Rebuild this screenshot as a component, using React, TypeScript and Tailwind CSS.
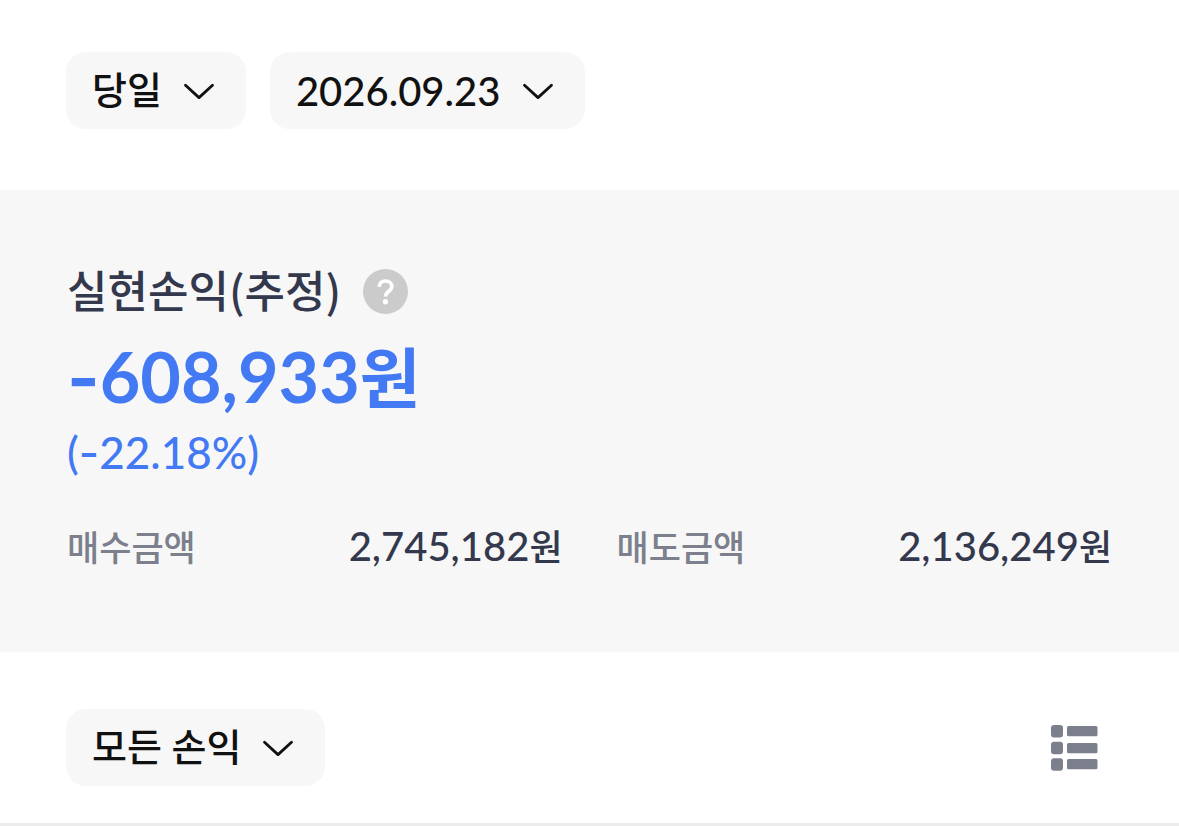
import type { ReactNode } from 'react';

function Chevron({ className = '' }: { className?: string }) {
  return (
    <svg
      viewBox="0 0 32 18"
      className={`w-8 h-[18px] ${className}`}
      fill="none"
      stroke="currentColor"
      strokeWidth="2.8"
      strokeLinecap="round"
      strokeLinejoin="round"
      aria-hidden="true"
    >
      <path d="M2.5 3.2 16 15.6 29.5 3.2" />
    </svg>
  );
}

interface PillSelectProps {
  label: string;
  options: string[];
}

function PillSelect({ label, options }: PillSelectProps) {
  return (
    <div className="relative">
      <select
        aria-label={label}
        className="block appearance-none field-sizing-content h-[77px] rounded-[20px] bg-[#f7f7f7] pl-[26px] pr-[84px] pb-0.5 text-[38px] font-medium text-[#111111]"
      >
        {options.map((option) => (
          <option key={option}>{option}</option>
        ))}
      </select>
      <Chevron className="absolute right-[31px] top-[30px] pointer-events-none text-[#111111]" />
    </div>
  );
}

// Inter's hyphen is wider and sits at digit mid-height
function Minus() {
  return <span className="font-['Inter',sans-serif] leading-none">-</span>;
}

interface AmountProps {
  label: string;
  children: ReactNode;
}

function Amount({ label, children }: AmountProps) {
  return (
    <div className="flex items-center justify-between">
      <dt className="text-[35px] leading-[48px] text-[#7b808c] font-medium">{label}</dt>
      <dd className="text-[40px] leading-[48px] font-medium text-[#34384d]">
        {children}
        <span className="text-[36px]">원</span>
      </dd>
    </div>
  );
}

export default function App() {
  return (
    <main className="bg-white font-['Lato','Noto_Sans_CJK_KR',sans-serif]">
      {/* Period filters */}
      <div className="flex items-center gap-6 px-[66px] pt-[52px] pb-[61px]">
        <PillSelect label="조회 기간" options={['당일', '1주일', '1개월']} />
        <button
          type="button"
          className="flex items-center gap-[22px] h-[77px] rounded-[20px] bg-[#f7f7f7] pl-[26px] pr-[31px] text-[40px] font-medium text-[#111111]"
        >
          2026.09.23
          <Chevron />
        </button>
      </div>

      {/* Realized profit summary */}
      <section className="bg-[#f7f7f7] px-[67px] pt-[71px] pb-[81px]">
        <div className="flex items-center gap-[22px]">
          <h2 className="pb-1 font-['Noto_Sans_CJK_KR',sans-serif] text-[44px] leading-[56px] font-medium text-[#34384d]">
            실현손익(추정)
          </h2>
          <button
            type="button"
            aria-label="도움말"
            className="flex items-center justify-center size-[45px] rounded-full bg-[#cbcbcb] text-white"
          >
            <svg viewBox="0 0 45 45" className="size-full" fill="none" aria-hidden="true">
              <path
                d="M16.2 17.8C16.4 14 19 12 22.6 12c3.8 0 6.2 2.2 6.2 5.5 0 4.9-6.2 4.7-6.2 10"
                stroke="currentColor"
                strokeWidth="3.6"
              />
              <circle cx="22.5" cy="32.8" r="2.7" fill="currentColor" />
            </svg>
          </button>
        </div>
        <p className="mt-[11px] text-[70px] leading-[88px] font-bold text-[#437af4]">
          <Minus />
          608,933<span className="text-[66px] leading-none">원</span>
        </p>
        <p className="mt-1 text-[44px] leading-[56px] font-medium text-[#437af4]">
          (<Minus />
          22.18%)
        </p>
        <dl className="mt-[42px] grid grid-cols-2 gap-[54px]">
          <Amount label="매수금액">2,745,182</Amount>
          <Amount label="매도금액">2,136,249</Amount>
        </dl>
      </section>

      {/* List filter */}
      <div className="flex items-center justify-between pl-[66px] pr-[81px] pt-[57px] pb-[37px] border-b-[3px] border-[#ececec]">
        <PillSelect label="손익 구분" options={['모든 손익', '이익', '손실']} />
        <button type="button" aria-label="목록 보기" className="text-[#7b808c]">
          <svg viewBox="0 0 48 46" className="w-12 h-[46px]" fill="currentColor" aria-hidden="true">
            <rect x="1" y="0" width="12" height="12.5" rx="3" />
            <rect x="1" y="16.8" width="12" height="12.5" rx="3" />
            <rect x="1" y="33.2" width="12" height="12.5" rx="3" />
            <rect x="17" y="1" width="30.5" height="10.3" rx="1.5" />
            <rect x="17" y="18" width="30.5" height="10.3" rx="1.5" />
            <rect x="17" y="34" width="30.5" height="10.3" rx="1.5" />
          </svg>
        </button>
      </div>
    </main>
  );
}
